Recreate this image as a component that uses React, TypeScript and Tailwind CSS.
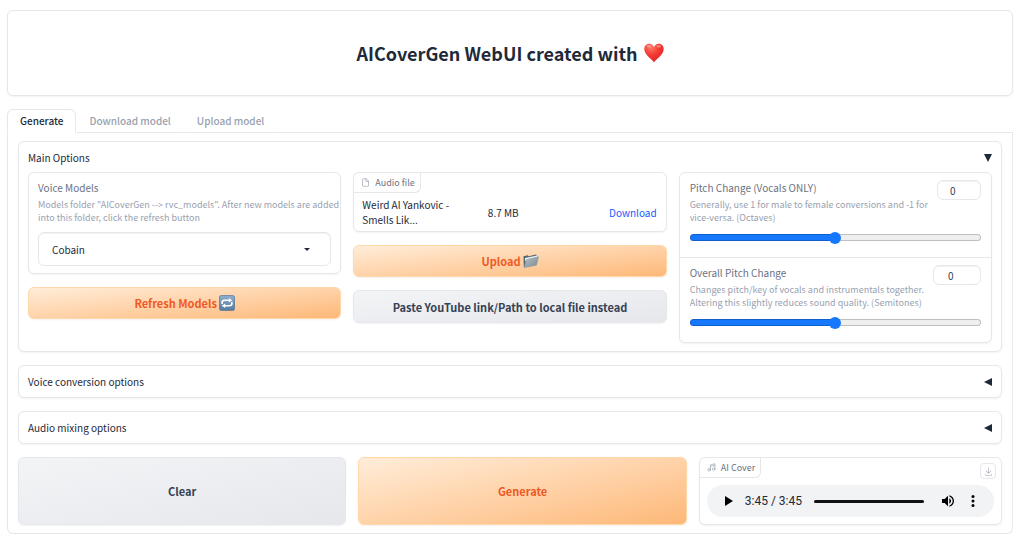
import { useState, type ReactNode } from "react";

function Heart() {
  return (
    <svg viewBox="0 0 20 20" className="h-5 w-5 shrink-0" aria-hidden="true">
      <defs>
        <radialGradient id="heart" cx="0.35" cy="0.2" r="0.9">
          <stop offset="0" stopColor="#ff7a68" />
          <stop offset="0.45" stopColor="#f53a34" />
          <stop offset="1" stopColor="#d81f26" />
        </radialGradient>
      </defs>
      <path
        d="M10 19.4C8.6 16.6.3 12.2.3 6.1.3 2.900 2.400.7 5.200.7c2.200 0 4 1.400 4.800 3.500C10.800 2.100 12.600.7 14.800.7c2.800 0 4.900 2.200 4.900 5.400 0 6.100-8.300 10.500-9.700 13.300Z"
        fill="url(#heart)"
      />
      <ellipse cx="4.800" cy="3.200" rx="2.300" ry="1.300" fill="#fff" opacity="0.35" />
      <ellipse cx="14.800" cy="3.200" rx="2.300" ry="1.300" fill="#fff" opacity="0.35" />
    </svg>
  );
}

function RepeatEmoji() {
  return (
    <svg viewBox="0 0 16 16" className="h-4 w-4 shrink-0" aria-hidden="true">
      <defs>
        <linearGradient id="repeat" x1="0" y1="0" x2="0" y2="1">
          <stop offset="0" stopColor="#8fb0cf" />
          <stop offset="1" stopColor="#55799f" />
        </linearGradient>
      </defs>
      <rect x="0.400" y="0.400" width="15.200" height="15.200" rx="2.200" fill="url(#repeat)" stroke="#5a7897" strokeWidth="0.800" />
      <path
        d="M3.100 9V7.700c0-1.600.9-2.500 2.500-2.500h4.600M12.900 7v1.300c0 1.600-.9 2.500-2.500 2.500H5.800"
        fill="none"
        stroke="#fff"
        strokeWidth="1.600"
      />
      <path d="M9.800 2.900v4.600l3.400-2.300ZM6.200 8.500v4.600l-3.400-2.300Z" fill="#fff" />
    </svg>
  );
}

function FolderEmoji() {
  return (
    <svg viewBox="0 0 16 16" className="h-4 w-4 shrink-0" aria-hidden="true">
      <defs>
        <linearGradient id="folder" x1="0" y1="0" x2="1" y2="1">
          <stop offset="0" stopColor="#b9c4cb" />
          <stop offset="1" stopColor="#77868f" />
        </linearGradient>
      </defs>
      <path d="M.8 14.200.5 3.200l4.200-.9.900 1 7.500-1.900.800 1.400v7.400Z" fill="#56656f" />
      <path d="m2 5 12-2.400v3L2 8Z" fill="#edf1f3" />
      <path d="M1.200 14.800 3.200 6.600 15.700 3.600 13.600 12.200Z" fill="url(#folder)" stroke="#8a98a1" strokeWidth="0.400" />
    </svg>
  );
}

function FileIcon() {
  return (
    <svg viewBox="0 0 24 24" className="h-[9px] w-[9px]" fill="none" stroke="currentColor" strokeWidth="1.800" strokeLinecap="round" strokeLinejoin="round" aria-hidden="true">
      <path d="M13 2H6a2 2 0 0 0-2 2v16a2 2 0 0 0 2 2h12a2 2 0 0 0 2-2V9z" />
      <path d="M13 2v7h7" />
    </svg>
  );
}

function MusicIcon() {
  return (
    <svg viewBox="0 0 24 24" className="h-[9px] w-[9px]" fill="none" stroke="currentColor" strokeWidth="1.800" strokeLinecap="round" strokeLinejoin="round" aria-hidden="true">
      <path d="M9 18V5l12-3v14" />
      <path d="M9 9l12-3" />
      <circle cx="5.500" cy="18" r="3.500" />
      <circle cx="17.500" cy="16" r="3.500" />
    </svg>
  );
}

function DownloadIcon() {
  return (
    <svg viewBox="0 0 32 32" className="h-[9px] w-[9px]" fill="currentColor" aria-hidden="true">
      <path d="M26 24v4H6v-4H4v4a2 2 0 0 0 2 2h20a2 2 0 0 0 2-2v-4zm0-10l-1.410-1.410L17 20.170V2h-2v18.170l-7.590-7.580L6 14l10 10l10-10z" />
    </svg>
  );
}

const box = "rounded-md border border-gray-200 bg-white shadow-xs";
const primary =
  "border border-orange-200 bg-linear-to-br from-[#ffedd9] to-[#fdb877] font-bold text-[#ee5a24]";
const secondary =
  "border border-gray-200 bg-linear-to-br from-gray-100 to-gray-200 font-bold text-gray-700";
const button =
  "flex w-full items-center justify-center gap-[2px] rounded-md text-[11px] leading-4 shadow-xs";

function Accordion({ title, initial = false, children }: { title: string; initial?: boolean; children?: ReactNode }) {
  const [open, setOpen] = useState(initial);
  return (
    <section className={`${box} px-[9px]`}>
      <button
        type="button"
        aria-expanded={open}
        onClick={() => setOpen(!open)}
        className="flex h-[31px] w-full items-center justify-between text-[10px] leading-4 text-gray-800"
      >
        <span>{title}</span>
        <svg viewBox="0 0 8 8" className="h-2 w-2" fill="currentColor" aria-hidden="true">
          {open ? <path d="M0 0h8L4 8Z" /> : <path d="M8 0v8L0 4Z" />}
        </svg>
      </button>
      {open && children}
    </section>
  );
}

function BlockLabel({ icon, children }: { icon: ReactNode; children: ReactNode }) {
  return (
    <div className="flex h-5 w-fit items-center gap-[5px] rounded-br-md border-r border-b border-gray-200 pr-[5px] pl-[7px] text-[9px] leading-4 text-gray-500">
      <span className="text-gray-400">{icon}</span>
      {children}
    </div>
  );
}

function PitchSlider({ id, label, info, min, max, wide = false }: { id: string; label: string; info: string; min: number; max: number; wide?: boolean }) {
  const [value, setValue] = useState(0);
  const filled = ((value - min) / (max - min)) * 100;
  return (
    <div className="px-[10px] pt-[7px] pb-4">
      <div className="flex items-start justify-between">
        <label htmlFor={id} className="w-[242px]">
          <span className="block text-[10px] leading-4 text-gray-500">{label}</span>
          <span className="block pt-[2px] text-[9px] leading-[13px] text-gray-400">{info}</span>
        </label>
        <input
          type="number"
          aria-label={`${label} value`}
          min={min}
          max={max}
          value={value}
          onChange={(e) => setValue(Number(e.target.value))}
          className={`${wide ? "w-12 pl-[14px]" : "w-11 pl-3"} h-5 shrink-0 rounded-md border border-gray-200 bg-white text-[10px] text-gray-700 inset-shadow-2xs [appearance:textfield] [&::-webkit-inner-spin-button]:appearance-none`}
        />
      </div>
      <input
        id={id}
        type="range"
        min={min}
        max={max}
        value={value}
        onChange={(e) => setValue(Number(e.target.value))}
        style={{ backgroundImage: `linear-gradient(to right, #1677ff ${filled}%, #efefef ${filled}%)` }}
        className="mt-[10px] block h-[7px] w-full appearance-none rounded-full border border-black/20 bg-origin-border bg-no-repeat [&::-webkit-slider-thumb]:h-3 [&::-webkit-slider-thumb]:w-3 [&::-webkit-slider-thumb]:appearance-none [&::-webkit-slider-thumb]:rounded-full [&::-webkit-slider-thumb]:bg-[#1677ff]"
      />
    </div>
  );
}

function AudioPlayer() {
  return (
    <div className={`${box} relative pb-[7px]`}>
      <BlockLabel icon={<MusicIcon />}>AI Cover</BlockLabel>
      <button
        type="button"
        aria-label="Download cover"
        className="absolute top-[5px] right-[5px] flex h-4 w-4 items-center justify-center rounded-sm border border-gray-200 bg-white text-gray-400"
      >
        <DownloadIcon />
      </button>
      <div className="mx-[7px] mt-[7px] flex h-8 items-center rounded-full bg-[#f1f3f4] pr-[18px] pl-[18px] text-black">
        <button type="button" aria-label="Play" className="flex">
          <svg viewBox="0 0 8 10" className="h-[10px] w-2" fill="currentColor" aria-hidden="true">
            <path d="M0 0v10l8-5Z" />
          </svg>
        </button>
        <span className="ml-3 font-[Roboto,sans-serif] text-[12px] leading-4 whitespace-nowrap text-gray-800">3:45 / 3:45</span>
        <input
          type="range"
          aria-label="Seek"
          min={0}
          max={225}
          defaultValue={225}
          className="mx-3 h-[3px] min-w-0 flex-1 appearance-none rounded-full bg-[#111] [&::-webkit-slider-thumb]:h-0 [&::-webkit-slider-thumb]:w-0 [&::-webkit-slider-thumb]:appearance-none"
        />
        <button type="button" aria-label="Mute" className="ml-[6px] flex">
          <svg viewBox="3 3 18 18" className="h-3 w-3" fill="currentColor" aria-hidden="true">
            <path d="M3 9v6h4l5 5V4L7 9H3zm13.500 3c0-1.770-1.020-3.290-2.500-4.030v8.050c1.480-.73 2.500-2.250 2.500-4.020zM14 3.230v2.060c2.890.86 5 3.540 5 6.710s-2.110 5.850-5 6.710v2.060c4.010-.91 7-4.490 7-8.770s-2.990-7.860-7-8.770z" />
          </svg>
        </button>
        <button type="button" aria-label="More options" className="ml-4 flex">
          <svg viewBox="0 0 6 12" className="h-3 w-[6px]" fill="currentColor" aria-hidden="true">
            <circle cx="3" cy="1.600" r="1.500" />
            <circle cx="3" cy="6" r="1.500" />
            <circle cx="3" cy="10.400" r="1.500" />
          </svg>
        </button>
      </div>
    </div>
  );
}

const tabs = ["Generate", "Download model", "Upload model"];

export default function App() {
  const [tab, setTab] = useState("Generate");
  return (
    <main className="bg-white pt-[10px] pr-[11px] pb-[11px] pl-[7px] font-['Noto_Sans_CJK_SC',sans-serif] text-gray-800">
      <header className={`${box} flex items-center justify-center py-[26px]`}>
        <h1 className="flex items-center gap-[6px] text-[18px] leading-8 font-bold">
          <span>AICoverGen WebUI created with</span>
          <Heart />
        </h1>
      </header>

      <div role="tablist" className="mt-[13px] flex">
        {tabs.map((name) => (
          <button
            key={name}
            type="button"
            role="tab"
            aria-selected={tab === name}
            onClick={() => setTab(name)}
            className={`h-6 rounded-t-md border px-3 text-[10px] leading-4 font-medium ${
              tab === name
                ? "border-gray-200 border-b-white text-gray-800"
                : "border-transparent border-b-gray-200 text-gray-400"
            }`}
          >
            {name}
          </button>
        ))}
        <div className="flex-1 border-b border-gray-200" />
      </div>

      <div className="flex flex-col gap-[13px] rounded-b-md border border-t-0 border-gray-200 px-[10px] pt-2 pb-2">
        <Accordion title="Main Options" initial>
          <div className="-mt-px grid grid-cols-3 items-start gap-3 pb-2">
            <div className="flex flex-col gap-[13px]">
              <div className={`${box} px-[9px] py-[7px]`}>
                <label htmlFor="voice" className="block text-[10px] leading-4 text-gray-500">
                  Voice Models
                </label>
                <p className="-mr-2 pt-[2px] text-[9px] leading-[13px] text-gray-400">
                  Models folder "AICoverGen --&gt; rvc_models". After new models are added into this folder, click the refresh button
                </p>
                <div className="relative mt-2">
                  <select
                    id="voice"
                    className="h-[34px] w-full appearance-none rounded-md border border-gray-200 bg-white px-[13px] text-[10px] text-gray-800 inset-shadow-2xs"
                  >
                    <option>Cobain</option>
                  </select>
                  <svg viewBox="0 0 6 3" className="pointer-events-none absolute top-4 right-[21px] h-[3px] w-[6px]" aria-hidden="true">
                    <path d="M0 0h6L3 3Z" fill="#1f2937" />
                  </svg>
                </div>
              </div>
              <button type="button" className={`${button} ${primary} h-8`}>
                Refresh Models
                <RepeatEmoji />
              </button>
            </div>

            <div className="flex flex-col gap-[13px]">
              <div className={`${box} pb-1`}>
                <BlockLabel icon={<FileIcon />}>Audio file</BlockLabel>
                <table className="mt-1 w-full table-fixed text-[10px] leading-[15px]">
                  <tbody>
                    <tr>
                      <td className="w-[40%] pr-6 pl-2">Weird Al Yankovic - Smells Lik...</td>
                      <td className="pl-[9px]">8.7 MB</td>
                      <td className="pr-[9px] text-right">
                        <a href="#download" className="text-blue-600">
                          Download
                        </a>
                      </td>
                    </tr>
                  </tbody>
                </table>
              </div>
              <button type="button" className={`${button} ${primary} h-8`}>
                Upload
                <FolderEmoji />
              </button>
              <button type="button" className={`${button} ${secondary} h-[33px]`}>
                Paste YouTube link/Path to local file instead
              </button>
            </div>

            <div className={`${box} divide-y divide-gray-200`}>
              <PitchSlider
                id="pitch-vocals"
                label="Pitch Change (Vocals ONLY)"
                info="Generally, use 1 for male to female conversions and -1 for vice-versa. (Octaves)"
                min={-3}
                max={3}
              />
              <PitchSlider
                id="pitch-all"
                label="Overall Pitch Change"
                info="Changes pitch/key of vocals and instrumentals together. Altering this slightly reduces sound quality. (Semitones)"
                min={-12}
                max={12}
                wide
              />
            </div>
          </div>
        </Accordion>
        <Accordion title="Voice conversion options" />
        <Accordion title="Audio mixing options" />
        <div className="grid grid-cols-[minmax(0,13fr)_minmax(0,13fr)_minmax(0,12fr)] gap-3">
          <button type="button" className={`${button} ${secondary}`}>
            Clear
          </button>
          <button type="button" className={`${button} ${primary}`}>
            Generate
          </button>
          <AudioPlayer />
        </div>
      </div>
    </main>
  );
}
